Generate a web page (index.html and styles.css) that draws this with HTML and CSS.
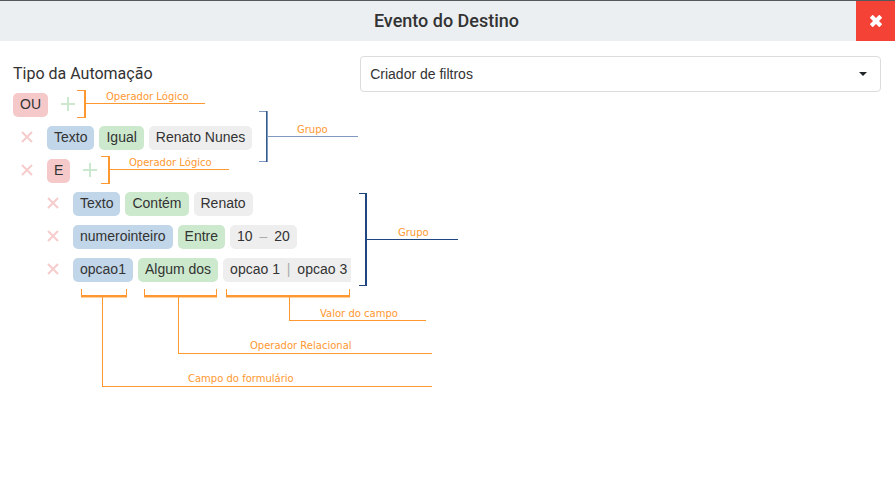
FILE: index.html
```html
<!DOCTYPE html>
<html lang="pt-BR">
<head>
<meta charset="utf-8">
<title>Evento do Destino</title>
<link rel="stylesheet" href="styles.css">
</head>
<body>
<svg class="sprite" aria-hidden="true">
  <symbol id="remove" viewBox="0 0 12 12"><path d="M1 1 11 11M11 1 1 11" fill="none" stroke="#f6cccc" stroke-width="2"/></symbol>
  <symbol id="add" viewBox="0 0 14 14"><path d="M7 0V14M0 7H14" fill="none" stroke="#cce9cf" stroke-width="2"/></symbol>
</svg>
<header class="header">
  <h1 class="title">Evento do Destino</h1>
  <button class="close" type="button" aria-label="Fechar">
    <svg width="12" height="12" viewBox="0 0 12 12" aria-hidden="true"><path d="M2.7 2.7 9.3 9.3M9.3 2.7 2.7 9.3" stroke="#fff" stroke-width="4.2" stroke-linecap="square"/></svg>
  </button>
</header>
<main class="panel">
  <div class="field">
    <label class="label" for="tipo">Tipo da Automação</label>
    <div class="select-wrap">
      <select class="select" id="tipo"><option>Criador de filtros</option></select>
      <svg class="caret" width="8" height="4" viewBox="0 0 8 4" aria-hidden="true"><path d="M0 0H8L4 4Z" fill="#212529"/></svg>
    </div>
  </div>
  <div class="builder">
    <div class="row">
      <button class="chip logic" type="button">OU</button>
      <button class="icon add" type="button" aria-label="Adicionar"><svg width="14" height="14"><use href="#add"/></svg></button>
    </div>
    <ul class="group root">
      <li class="row">
        <button class="icon remove" type="button" aria-label="Remover"><svg width="12" height="12"><use href="#remove"/></svg></button>
        <button class="chip name" type="button">Texto</button>
        <button class="chip relation" type="button">Igual</button>
        <button class="chip value" type="button">Renato Nunes</button>
      </li>
      <li>
        <div class="row">
          <button class="icon remove" type="button" aria-label="Remover"><svg width="12" height="12"><use href="#remove"/></svg></button>
          <button class="chip logic" type="button">E</button>
          <button class="icon add" type="button" aria-label="Adicionar"><svg width="14" height="14"><use href="#add"/></svg></button>
        </div>
        <ul class="group nested">
          <li class="row">
            <button class="icon remove" type="button" aria-label="Remover"><svg width="12" height="12"><use href="#remove"/></svg></button>
            <button class="chip name" type="button">Texto</button>
            <button class="chip relation" type="button">Contém</button>
            <button class="chip value" type="button">Renato</button>
          </li>
          <li class="row">
            <button class="icon remove" type="button" aria-label="Remover"><svg width="12" height="12"><use href="#remove"/></svg></button>
            <button class="chip name" type="button">numerointeiro</button>
            <button class="chip relation" type="button">Entre</button>
            <button class="chip value" type="button">10 <span class="sep">–</span> 20</button>
          </li>
          <li class="row">
            <button class="icon remove" type="button" aria-label="Remover"><svg width="12" height="12"><use href="#remove"/></svg></button>
            <button class="chip name" type="button">opcao1</button>
            <button class="chip relation" type="button">Algum dos</button>
            <button class="chip value clipped" type="button">opcao 1 <span class="sep">|</span> opcao 3</button>
          </li>
        </ul>
      </li>
    </ul>
    <!-- Callouts over the filter tree; origin is the top left of the builder -->
    <svg class="callouts" width="460" height="310" viewBox="0 0 460 310">
      <g fill="#ff9830" shape-rendering="crispEdges">
        <path d="M64-3h9v28h-9v-1h7V-2h-7zM72 10h120v1H72z"/>
        <path d="M88 63h9v28h-9v-1h7V64h-7zM96 76h120v1H96z"/>
        <path d="M68 196h1v6h44v-6h1v8H68zM89 204h1v89h329v1H89z"/>
        <path d="M131 196h1v6h71v-6h1v8h-73zM165 204h1v56h253v1H165z"/>
        <path d="M213 196h1v6h122v-6h1v8H213zM276 204h1v23h136v1H276z"/>
      </g>
      <g fill="#ffcf9f" shape-rendering="crispEdges">
        <path d="M68 204h21v1H68zM90 204h24v1H90zM131 204h34v1h-34zM166 204h38v1h-38zM213 204h63v1h-63zM277 204h60v1h-60z"/>
      </g>
      <g fill="#7f99c0" shape-rendering="crispEdges">
        <path d="M246 18h9v51h-9v-1h7V19h-7zM255 43h90v1h-90z"/>
        <path fill="#34598f" d="M253 18h1v51h-1z"/>
      </g>
      <path fill="#1f4680" shape-rendering="crispEdges" d="M346 100h8v93h-8v-1h6v-91h-6zM354 146h91v1h-91z"/>
      <g class="note">
        <text x="93" y="7">Operador Lógico</text>
        <text x="116" y="73">Operador Lógico</text>
        <text x="284" y="40">Grupo</text>
        <text x="385" y="143">Grupo</text>
        <text x="307" y="224">Valor do campo</text>
        <text x="237" y="256">Operador Relacional</text>
        <text x="175" y="289">Campo do formulário</text>
      </g>
    </svg>
  </div>
</main>
</body>
</html>
```
FILE: styles.css
```css
* { box-sizing: border-box; }
body {
  margin: 0;
  background: #fff;
  color: #333;
  font: 14px/20px "Liberation Sans", Arial, sans-serif;
}
button {
  border: 0;
  padding: 0;
  background: none;
  color: inherit;
  font: inherit;
  cursor: pointer;
}
ul { list-style: none; margin: 0; padding: 0; }
svg { display: block; }
.sprite { position: absolute; width: 0; height: 0; }
.header {
  display: grid;
  grid-template-columns: 37px 1fr 39px;
  height: 41px;
  border-top: 1px solid #55575b;
  background: #ebeff2;
}
.title {
  grid-column: 2;
  align-self: center;
  margin: 0;
  text-align: center;
  font: 500 18px/24px Roboto, sans-serif;
}
.close {
  display: flex;
  align-items: center;
  justify-content: center;
  background: #f44336;
}
.panel { padding: 15px 14px 15px 13px; }
.field {
  display: grid;
  grid-template-columns: 2fr 3fr;
  align-items: center;
}
.label { font: 16px/24px Roboto, sans-serif; }
.select-wrap { position: relative; }
.select {
  display: block;
  width: 100%;
  height: 36px;
  padding: 0 9px;
  border: 1px solid #dcdcdc;
  border-radius: 4px;
  background: #fff;
  color: #333;
  font: inherit;
  appearance: none;
}
.caret { position: absolute; right: 14px; top: 16px; pointer-events: none; }
.builder { position: relative; margin-top: 1px; padding-bottom: 120px; }
.row { display: flex; align-items: center; gap: 5px; height: 24px; }
.group { padding-top: 9px; }
.group li + li { margin-top: 9px; }
.root { margin-left: 8px; }
.nested { margin-left: 26px; }
.chip {
  height: 24px;
  padding: 0 7px 2px;
  border-radius: 5px;
  line-height: 22px;
  white-space: pre;
}
.logic { background: #f5c9ca; }
.name { background: #c1d6e9; }
.relation { background: #cce9cd; }
.value { background: #eee; }
.clipped { padding-right: 4px; border-radius: 5px 0 0 5px; }
.sep { margin: 0 3px; color: #aaa; }
.icon { padding-bottom: 2px; }
.add { margin-left: 8px; }
.remove { margin-right: 9px; }
.callouts {
  position: absolute;
  top: 0;
  left: 0;
  overflow: visible;
  pointer-events: none;
}
.note { fill: #ff9830; font: 10px "DejaVu Sans", sans-serif; }
```
